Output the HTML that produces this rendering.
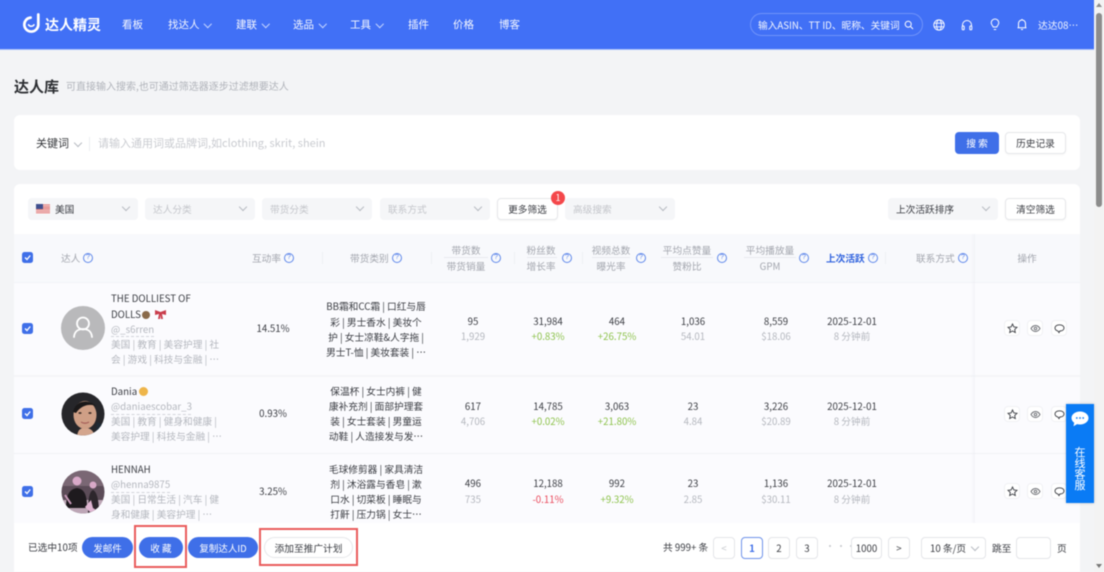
<!DOCTYPE html>
<html lang="zh"><head><meta charset="utf-8"><title>达人库</title>
<style>
html,body{margin:0;padding:0;width:1104px;height:572px;overflow:hidden;background:#f3f4f6}
#w{position:relative;width:1104px;height:572px;font-family:"Noto Sans CJK SC","Liberation Sans",sans-serif;font-size:9.7px;color:#3a3c42;filter:blur(.4px)}
.a{position:absolute}
.t{position:absolute;white-space:nowrap;line-height:16px}
.c{transform:translateX(-50%)}
.g{color:#b4b7be}
.h{color:#a3a6ae}
.n{color:#fff;font-size:10.5px;opacity:.95}
.gr{color:#8cc24a}
.r{color:#ea4a5c}
.sel{position:absolute;top:198px;height:22px;background:#f5f6f8;border-radius:4px}
.sel i,.ch{position:absolute;width:5px;height:5px;border-right:1px solid #b8bbc2;border-bottom:1px solid #b8bbc2;transform:rotate(45deg)}
.sel i{right:9px;top:6px}
.nch{position:absolute;top:21px;width:4.5px;height:4.5px;border-right:1px solid #c3d3ff;border-bottom:1px solid #c3d3ff;transform:rotate(45deg)}
.btn{position:absolute;background:#fff;border:1px solid #e6e7ea;border-radius:4px;box-sizing:border-box;text-align:center;color:#3a3c42;box-shadow:0 1px 2px rgba(0,0,0,.04)}
.q{position:absolute;box-sizing:border-box;width:10px;height:10px;border:1px solid #5f88ea;border-radius:50%;color:#5f88ea;font-size:7px;line-height:8px;text-align:center;font-family:"Liberation Sans",sans-serif;margin-left:-5px;margin-top:-5px}
.cb{position:absolute;left:22px;width:11px;height:11px;border-radius:2.5px;background:#3f6fe8}
.cb svg{position:absolute;left:0;top:0}
.ib{position:absolute;width:16px;height:16px;background:#fff;border:1px solid #f0f1f4;border-radius:4px;box-sizing:border-box}
.ib svg{position:absolute;left:1.5px;top:1.5px}
.p{position:absolute;top:537px;height:22px;box-sizing:border-box;background:#fff;border:1px solid #e4e5e9;border-radius:4px;text-align:center;line-height:21px;color:#3a3c42}
.pill{position:absolute;top:537px;height:21px;border-radius:11px;background:#3f6fe8;color:#fff;text-align:center;line-height:22px;font-size:9.5px}
.red{position:absolute;box-sizing:border-box;border:2px solid #e95c5c}
.nl{position:absolute;width:1px;background:#eef0f4}
.ul{position:absolute;height:1px;background:#e8eaef}
.dash{position:absolute;border-top:1px dashed #d2d4da;height:0}
.d{position:absolute;top:545px;width:2px;height:2px;border-radius:50%;background:#c4c6cb}
</style></head><body><div id="w">

<div class="a" style="left:-5px;top:-5px;width:1114px;height:582px;background:#f3f4f6"></div>

<!-- header -->
<div class="a" style="left:-5px;top:-5px;width:1099px;height:54px;background:#4170f6"></div>
<div class="a" style="left:-5px;top:49px;width:1099px;height:1px;background:#a9c0fb"></div>
<svg class="a" style="left:23px;top:13px" width="19" height="21" viewBox="0 0 19 21" fill="none"><path d="M15.300 1.500V11.300A7 7 0 1 1 7.600 4.600" stroke="#fff" stroke-width="2.700" stroke-linecap="round"/><path d="M5.500 11.800C6.800 13.800 9.800 13.800 11 11.800" stroke="#fff" stroke-width="1.500" stroke-linecap="round"/></svg>
<div class="t" style="left:45px;top:16px;font-size:14px;font-weight:700;color:#fff;line-height:18px">达人精灵</div>
<div class="t n" style="left:122px;top:17px">看板</div>
<div class="t n" style="left:168px;top:17px">找达人</div><div class="nch" style="left:205px"></div>
<div class="t n" style="left:236px;top:17px">建联</div><div class="nch" style="left:263px"></div>
<div class="t n" style="left:293px;top:17px">选品</div><div class="nch" style="left:320px"></div>
<div class="t n" style="left:350px;top:17px">工具</div><div class="nch" style="left:377px"></div>
<div class="t n" style="left:408px;top:17px">插件</div>
<div class="t n" style="left:453px;top:17px">价格</div>
<div class="t n" style="left:499px;top:17px">博客</div>
<div class="a" style="left:750px;top:13px;width:173px;height:23px;box-sizing:border-box;border:1px solid #6f93fa;border-radius:12px"></div>
<div class="t n" style="left:758px;top:17px;font-size:9.7px">输入ASIN、TT ID、昵称、关键词</div>
<svg class="a" style="left:904px;top:20px" width="10" height="10" viewBox="0 0 10 10" fill="none" stroke="#fff"><circle cx="4.200" cy="4.200" r="3"/><path d="M6.500 6.500L9 9"/></svg>
<svg class="a" style="left:933px;top:19px" width="12" height="12" viewBox="0 0 12 12" fill="none" stroke="#fff" stroke-width=".9"><circle cx="6" cy="6" r="5.200"/><ellipse cx="6" cy="6" rx="2.400" ry="5.200"/><path d="M1 4.200H11M1 7.800H11"/></svg>
<svg class="a" style="left:961px;top:19px" width="12" height="12" viewBox="0 0 12 12" fill="none" stroke="#fff" stroke-width="1"><path d="M1.500 7.500V6a4.500 4.500 0 0 1 9 0v1.500"/><rect x="1.200" y="7" width="2" height="3.800" rx=".8"/><rect x="8.800" y="7" width="2" height="3.800" rx=".8"/></svg>
<svg class="a" style="left:989px;top:18px" width="12" height="13" viewBox="0 0 12 13" fill="none" stroke="#fff" stroke-width="1"><path d="M4.200 9C3.800 7.600 2.200 6.800 2.200 4.800a3.800 3.800 0 0 1 7.600 0C9.800 6.800 8.200 7.600 7.800 9Z"/><path d="M4.800 11.500H7.200"/></svg>
<svg class="a" style="left:1016px;top:18px" width="12" height="13" viewBox="0 0 12 13" fill="none" stroke="#fff" stroke-width="1"><path d="M2.500 9.800V5.500a3.500 3.500 0 0 1 7 0v4.300ZM1.500 9.800H10.500M5 11.500H7M6 1V2"/></svg>
<div class="t n" style="left:1038px;top:17px;font-size:9.800px">达达08…</div>

<!-- scrollbar -->
<div class="a" style="left:1094px;top:-5px;width:15px;height:582px;background:#f3f3f3"></div>
<div class="a" style="left:1096px;top:13px;width:6px;height:194px;background:#8c8c8c;border-radius:3px"></div>
<div class="a" style="left:1096px;top:3px;width:0;height:0;border:3px solid transparent;border-bottom:4px solid #8c8c8c;border-top:0"></div>
<div class="a" style="left:1096px;top:564px;width:0;height:0;border:3px solid transparent;border-top:4px solid #777;border-bottom:0"></div>

<!-- title -->
<div class="t" style="left:14px;top:77px;font-size:15px;font-weight:700;color:#2d2f33;line-height:20px">达人库</div>
<div class="t" style="left:66px;top:78px;font-size:10px;color:#b0b3ba">可直接输入搜索,也可通过筛选器逐步过滤想要达人</div>

<!-- search card -->
<div class="a" style="left:14px;top:115px;width:1066px;height:55px;background:#fff;border-radius:6px"></div>
<div class="t" style="left:36px;top:135px;font-size:11px;color:#35373b">关键词</div>
<div class="ch" style="left:75px;top:140px"></div>
<div class="a" style="left:89px;top:137px;width:1px;height:14px;background:#eceef1"></div>
<div class="t" style="left:98px;top:135px;font-size:11px;color:#c9cbd0">请输入通用词或品牌词,如clothing, skrit, shein</div>
<div class="a" style="left:955px;top:132px;width:44px;height:22px;background:#3f6fe8;border-radius:4px;color:#fff;text-align:center;line-height:23px">搜 索</div>
<div class="btn" style="left:1005px;top:132px;width:61px;height:22px;line-height:21px">历史记录</div>

<!-- table card -->
<div class="a" style="left:14px;top:184px;width:1066px;height:388px;background:#fff;border-radius:6px 6px 0 0"></div>
<div class="sel" style="left:28px;width:110px"><i></i></div>
<svg class="a" style="left:36px;top:204px" width="14" height="10" viewBox="0 0 14 10"><rect width="14" height="10" fill="#fff"/><path d="M0 .8H14M0 2.400H14M0 4H14M0 5.600H14M0 7.200H14M0 8.800H14" stroke="#d9605f" stroke-width=".9"/><rect width="7" height="5" fill="#3f4f8e"/></svg>
<div class="t" style="left:55px;top:201px;color:#3a3c42">美国</div>
<div class="sel" style="left:145px;width:110px"><i></i></div><div class="t" style="left:153px;top:201px;color:#c4c6cb">达人分类</div>
<div class="sel" style="left:262px;width:110px"><i></i></div><div class="t" style="left:270px;top:201px;color:#c4c6cb">带货分类</div>
<div class="sel" style="left:380px;width:110px"><i></i></div><div class="t" style="left:388px;top:201px;color:#c4c6cb">联系方式</div>
<div class="btn" style="left:497px;top:198px;width:61px;height:22px;line-height:21px">更多筛选</div>
<div class="a" style="left:551px;top:191px;width:14px;height:14px;border-radius:50%;background:#f4474a;color:#fff;text-align:center;font-size:9px;line-height:14px">1</div>
<div class="sel" style="left:565px;width:110px"><i></i></div><div class="t" style="left:573px;top:201px;color:#c4c6cb">高级搜索</div>
<div class="sel" style="left:888px;width:110px"><i></i></div><div class="t" style="left:896px;top:201px;color:#3a3c42">上次活跃排序</div>
<div class="btn" style="left:1005px;top:198px;width:61px;height:22px;line-height:21px">清空筛选</div>

<!-- table head/body -->
<div class="a" style="left:14px;top:234px;width:1066px;height:48px;background:#f8f9fc"></div>
<div class="a" style="left:14px;top:282px;width:1066px;height:241px;background:#fbfbfe"></div>
<div class="a" style="left:14px;top:282px;width:1066px;height:1px;background:#f2f3f7"></div>
<div class="a" style="left:14px;top:375px;width:1066px;height:2px;background:#f4f5f8"></div>
<div class="a" style="left:14px;top:453px;width:1066px;height:1px;background:#f1f2f6"></div>
<div class="a" style="left:971px;top:234px;width:4px;height:289px;background:linear-gradient(90deg,rgba(230,232,238,0),rgba(230,232,238,.35))"></div>
<div class="nl" style="left:322px;top:252px;height:12px"></div>
<div class="nl" style="left:431px;top:252px;height:12px"></div>
<div class="nl" style="left:514px;top:252px;height:12px"></div>
<div class="nl" style="left:582px;top:252px;height:12px"></div>
<div class="nl" style="left:885px;top:252px;height:12px"></div>

<div class="cb" style="top:252px"><svg width="11" height="11" viewBox="0 0 11 11" fill="none"><path d="M3 5.500L5 7.500L8.200 3.500" stroke="#fff" stroke-width="1.300"/></svg></div>
<div class="t h" style="left:61px;top:250px">达人</div><div class="q" style="left:88px;top:258px">?</div>
<div class="t h" style="left:252px;top:250px">互动率</div><div class="q" style="left:289px;top:258px">?</div>
<div class="t h" style="left:350px;top:250px">带货类别</div><div class="q" style="left:397px;top:258px">?</div>
<div class="t h c" style="left:466px;top:242px">带货数</div><div class="ul" style="left:444px;top:257px;width:44px"></div><div class="t h c" style="left:466px;top:258px">带货销量</div><div class="q" style="left:496px;top:258px">?</div>
<div class="t h c" style="left:541px;top:242px">粉丝数</div><div class="ul" style="left:527px;top:257px;width:30px"></div><div class="t h c" style="left:541px;top:258px">增长率</div><div class="q" style="left:567px;top:258px">?</div>
<div class="t h c" style="left:611px;top:242px">视频总数</div><div class="ul" style="left:592px;top:257px;width:38px"></div><div class="t h c" style="left:611px;top:258px">曝光率</div><div class="q" style="left:641px;top:258px">?</div>
<div class="t h c" style="left:687px;top:242px">平均点赞量</div><div class="ul" style="left:661px;top:257px;width:52px"></div><div class="t h c" style="left:687px;top:258px">赞粉比</div><div class="q" style="left:722px;top:258px">?</div>
<div class="t h c" style="left:770px;top:242px">平均播放量</div><div class="ul" style="left:744px;top:257px;width:52px"></div><div class="t h c" style="left:770px;top:258px">GPM</div><div class="q" style="left:804px;top:258px">?</div>
<div class="t" style="left:826px;top:250px;color:#2f62de;font-weight:700">上次活跃</div><div class="q" style="left:873px;top:258px">?</div>
<div class="t h" style="left:916px;top:250px">联系方式</div><div class="q" style="left:963px;top:258px">?</div>
<div class="t h c" style="left:1027px;top:250px">操作</div>

<!-- row 1 -->
<div class="cb" style="top:323px"><svg width="11" height="11" viewBox="0 0 11 11" fill="none"><path d="M3 5.500L5 7.500L8.200 3.500" stroke="#fff" stroke-width="1.300"/></svg></div>
<svg class="a" style="left:61px;top:306px" width="44" height="44" viewBox="0 0 44 44"><circle cx="22" cy="22" r="22" fill="#b9b9bb"/><circle cx="22" cy="17.500" r="6" fill="none" stroke="#fff" stroke-width="1.800"/><path d="M13 31c.5-5.500 4-8 9-8s8.500 2.500 9 8" fill="none" stroke="#fff" stroke-width="1.800" stroke-linecap="round"/></svg>
<div class="t" style="left:111px;top:290px">THE DOLLIEST OF</div>
<div class="t" style="left:111px;top:306px">DOLLS</div>
<div class="a" style="left:142px;top:311px;width:8px;height:8px;border-radius:50%;background:#8a6a4a"></div>
<svg class="a" style="left:155px;top:310px" width="11" height="9" viewBox="0 0 11 9"><path d="M0 0L5.500 2L11 0V5L7 4L8 9H6L5.500 5L5 9H3L4 4L0 5Z" fill="#c93d4c"/></svg>
<div class="t g" style="left:111px;top:321px">@_s6rren</div><div class="dash" style="left:111px;top:336px;width:43px"></div>
<div class="t g" style="left:111px;top:336px">美国 | 教育 | 美容护理 | 社</div>
<div class="t g" style="left:111px;top:351px">会 | 游戏 | 科技与金融 | …</div>
<div class="t c" style="left:273px;top:320px">14.51%</div>
<div class="t c" style="left:376px;top:298px">BB霜和CC霜 | 口红与唇</div>
<div class="t c" style="left:376px;top:314px">彩 | 男士香水 | 美妆个</div>
<div class="t c" style="left:376px;top:329px">护 | 女士凉鞋&amp;人字拖 |</div>
<div class="t c" style="left:376px;top:344px">男士T-恤 | 美妆套装 | …</div>
<div class="t c" style="left:473px;top:313px">95</div><div class="t c g" style="left:473px;top:328px">1,929</div>
<div class="t c" style="left:548px;top:313px">31,984</div><div class="t c gr" style="left:548px;top:328px">+0.83%</div>
<div class="t c" style="left:617px;top:313px">464</div><div class="t c gr" style="left:617px;top:328px">+26.75%</div>
<div class="t c" style="left:693px;top:313px">1,036</div><div class="t c g" style="left:693px;top:328px">54.01</div>
<div class="t c" style="left:776px;top:313px">8,559</div><div class="t c g" style="left:776px;top:328px">$18.06</div>
<div class="t c" style="left:852px;top:313px">2025-12-01</div><div class="t c g" style="left:852px;top:328px">8 分钟前</div>

<!-- row 2 -->
<div class="cb" style="top:408px"><svg width="11" height="11" viewBox="0 0 11 11" fill="none"><path d="M3 5.500L5 7.500L8.200 3.500" stroke="#fff" stroke-width="1.300"/></svg></div>
<svg class="a" style="left:61px;top:392px" width="44" height="44" viewBox="0 0 44 44"><defs><clipPath id="c1"><circle cx="22" cy="22" r="21.500"/></clipPath></defs><g clip-path="url(#c1)"><rect width="44" height="44" fill="#26262a"/><path d="M0 28L9 44H0Z" fill="#3f6a86"/><path d="M36 30L44 34V44H34Z" fill="#1f2a34"/><path d="M16 44C17 38 19 36 24 36s8 2 10 8Z" fill="#d4a68e"/><ellipse cx="24" cy="23" rx="11.500" ry="14" fill="#cf9f86"/><path d="M12 20C14 10 26 5 36 15C32 12 22 11 15 21Z" fill="#1a1819"/><ellipse cx="19" cy="21" rx="1.600" ry=".9" fill="#3a2a24"/><ellipse cx="29" cy="21" rx="1.600" ry=".9" fill="#3a2a24"/><path d="M20 30c2.500 1.500 5.500 1.500 8 0" stroke="#a8625c" stroke-width="1.300" fill="none"/></g></svg>
<div class="t" style="left:111px;top:383px">Dania</div>
<div class="a" style="left:139px;top:387px;width:9px;height:9px;border-radius:50%;background:#eeb54a"></div>
<div class="t g" style="left:111px;top:398px">@daniaescobar_3</div><div class="dash" style="left:111px;top:414px;width:80px"></div>
<div class="t g" style="left:111px;top:413px">美国 | 教育 | 健身和健康 |</div>
<div class="t g" style="left:111px;top:428px">美容护理 | 科技与金融 | …</div>
<div class="t c" style="left:273px;top:405px">0.93%</div>
<div class="t c" style="left:376px;top:383px">保温杯 | 女士内裤 | 健</div>
<div class="t c" style="left:376px;top:398px">康补充剂 | 面部护理套</div>
<div class="t c" style="left:376px;top:413px">装 | 女士套装 | 男童运</div>
<div class="t c" style="left:376px;top:428px">动鞋 | 人造接发与发…</div>
<div class="t c" style="left:473px;top:398px">617</div><div class="t c g" style="left:473px;top:413px">4,706</div>
<div class="t c" style="left:548px;top:398px">14,785</div><div class="t c gr" style="left:548px;top:413px">+0.02%</div>
<div class="t c" style="left:617px;top:398px">3,063</div><div class="t c gr" style="left:617px;top:413px">+21.80%</div>
<div class="t c" style="left:693px;top:398px">23</div><div class="t c g" style="left:693px;top:413px">4.84</div>
<div class="t c" style="left:776px;top:398px">3,226</div><div class="t c g" style="left:776px;top:413px">$20.89</div>
<div class="t c" style="left:852px;top:398px">2025-12-01</div><div class="t c g" style="left:852px;top:413px">8 分钟前</div>

<!-- row 3 -->
<div class="cb" style="top:486px"><svg width="11" height="11" viewBox="0 0 11 11" fill="none"><path d="M3 5.500L5 7.500L8.200 3.500" stroke="#fff" stroke-width="1.300"/></svg></div>
<svg class="a" style="left:61px;top:470px" width="44" height="44" viewBox="0 0 44 44"><defs><clipPath id="c2"><circle cx="22" cy="22" r="21.500"/></clipPath></defs><g clip-path="url(#c2)"><rect width="44" height="44" fill="#5c4c58"/><path d="M0 0H44V16H0Z" fill="#7a6774"/><path d="M0 30H44V44H0Z" fill="#bda6b6"/><circle cx="16" cy="11" r="4.500" fill="#d9a9c8"/><circle cx="32" cy="15" r="3.500" fill="#d9a9c8"/><path d="M5 38C5 24 9 19 16 18C23 19 26 24 26 38Z" fill="#1e1a1e"/><path d="M27 44C27 30 28 22 32 20C36 22 38 30 38 44Z" fill="#2d262c"/><path d="M24 37L30 30L32 38L37 41L29 42Z" fill="#e0b6d2"/><path d="M4 25L10 34" stroke="#c99ab9" stroke-width="2"/></g></svg>
<div class="t" style="left:111px;top:461px">HENNAH</div>
<div class="t g" style="left:111px;top:476px">@henna9875</div><div class="dash" style="left:111px;top:492px;width:59px"></div>
<div class="t g" style="left:111px;top:491px">美国 | 日常生活 | 汽车 | 健</div>
<div class="t g" style="left:111px;top:506px">身和健康 | 美容护理 | …</div>
<div class="t c" style="left:273px;top:483px">3.25%</div>
<div class="t c" style="left:376px;top:461px">毛球修剪器 | 家具清洁</div>
<div class="t c" style="left:376px;top:476px">剂 | 沐浴露与香皂 | 漱</div>
<div class="t c" style="left:376px;top:491px">口水 | 切菜板 | 睡眠与</div>
<div class="t c" style="left:376px;top:506px">打鼾 | 压力锅 | 女士…</div>
<div class="t c" style="left:473px;top:475px">496</div><div class="t c g" style="left:473px;top:491px">735</div>
<div class="t c" style="left:548px;top:475px">12,188</div><div class="t c r" style="left:548px;top:491px">-0.11%</div>
<div class="t c" style="left:617px;top:475px">992</div><div class="t c gr" style="left:617px;top:491px">+9.32%</div>
<div class="t c" style="left:693px;top:475px">23</div><div class="t c g" style="left:693px;top:491px">2.85</div>
<div class="t c" style="left:776px;top:475px">1,136</div><div class="t c g" style="left:776px;top:491px">$30.11</div>
<div class="t c" style="left:852px;top:475px">2025-12-01</div><div class="t c g" style="left:852px;top:491px">8 分钟前</div>

<!-- action icons -->
<div class="ib" style="left:1004px;top:320px"><svg width="11" height="11" viewBox="0 0 11 11" fill="none" stroke="#3a3c42" stroke-width=".9"><path d="M5.500 1L6.900 3.900L10 4.300L7.700 6.400L8.300 9.500L5.500 8L2.700 9.500L3.300 6.400L1 4.300L4.100 3.900Z"/></svg></div>
<div class="ib" style="left:1027px;top:320px"><svg width="11" height="11" viewBox="0 0 11 11" fill="none" stroke="#6a6c72" stroke-width=".9"><path d="M1 5.500C2.500 3 4 2.500 5.500 2.500S8.500 3 10 5.500C8.500 8 7 8.500 5.500 8.500S2.500 8 1 5.500Z"/><circle cx="5.500" cy="5.500" r="1.300"/></svg></div>
<div class="ib" style="left:1051px;top:320px"><svg width="11" height="11" viewBox="0 0 11 11" fill="none" stroke="#3a3c42" stroke-width=".9"><path d="M5.500 1.800C8 1.800 10 3 10 5S8 8 5.800 8L5 9.600L3.800 7.900C2.200 7.500 1 6.500 1 5C1 3 3 1.800 5.500 1.800Z"/></svg></div>
<div class="ib" style="left:1004px;top:406px"><svg width="11" height="11" viewBox="0 0 11 11" fill="none" stroke="#3a3c42" stroke-width=".9"><path d="M5.500 1L6.900 3.900L10 4.300L7.700 6.400L8.300 9.500L5.500 8L2.700 9.500L3.300 6.400L1 4.300L4.100 3.900Z"/></svg></div>
<div class="ib" style="left:1027px;top:406px"><svg width="11" height="11" viewBox="0 0 11 11" fill="none" stroke="#6a6c72" stroke-width=".9"><path d="M1 5.500C2.500 3 4 2.500 5.500 2.500S8.500 3 10 5.500C8.500 8 7 8.500 5.500 8.500S2.500 8 1 5.500Z"/><circle cx="5.500" cy="5.500" r="1.300"/></svg></div>
<div class="ib" style="left:1051px;top:406px"><svg width="11" height="11" viewBox="0 0 11 11" fill="none" stroke="#3a3c42" stroke-width=".9"><path d="M5.500 1.800C8 1.800 10 3 10 5S8 8 5.800 8L5 9.600L3.800 7.900C2.200 7.500 1 6.500 1 5C1 3 3 1.800 5.500 1.800Z"/></svg></div>
<div class="ib" style="left:1004px;top:483px"><svg width="11" height="11" viewBox="0 0 11 11" fill="none" stroke="#3a3c42" stroke-width=".9"><path d="M5.500 1L6.900 3.900L10 4.300L7.700 6.400L8.300 9.500L5.500 8L2.700 9.500L3.300 6.400L1 4.300L4.100 3.900Z"/></svg></div>
<div class="ib" style="left:1027px;top:483px"><svg width="11" height="11" viewBox="0 0 11 11" fill="none" stroke="#6a6c72" stroke-width=".9"><path d="M1 5.500C2.500 3 4 2.500 5.500 2.500S8.500 3 10 5.500C8.500 8 7 8.500 5.500 8.500S2.500 8 1 5.500Z"/><circle cx="5.500" cy="5.500" r="1.300"/></svg></div>
<div class="ib" style="left:1051px;top:483px"><svg width="11" height="11" viewBox="0 0 11 11" fill="none" stroke="#3a3c42" stroke-width=".9"><path d="M5.500 1.800C8 1.800 10 3 10 5S8 8 5.800 8L5 9.600L3.800 7.900C2.200 7.500 1 6.500 1 5C1 3 3 1.800 5.500 1.800Z"/></svg></div>

<!-- bottom bar -->
<div class="a" style="left:14px;top:523px;width:1066px;height:49px;background:#fff;border-radius:0 0 8px 8px"></div>
<div class="t" style="left:28px;top:539px">已选中10项</div>
<div class="pill" style="left:82px;width:51px">发邮件</div>
<div class="pill" style="left:139px;width:44px">收 藏</div>
<div class="pill" style="left:188px;width:70px">复制达人ID</div>
<div class="a" style="left:264px;top:537px;width:89px;height:21px;box-sizing:border-box;border:1px solid #e6e7ea;border-radius:11px;background:#fff;text-align:center;line-height:20px">添加至推广计划</div>
<div class="red" style="left:134px;top:525px;width:53px;height:43px"></div>
<div class="red" style="left:259px;top:528px;width:99px;height:38px"></div>

<div class="t" style="left:663px;top:539px">共 999+ 条</div>
<div class="p" style="left:713px;width:22px;color:#c4c6cb">&lt;</div>
<div class="p" style="left:741px;width:22px;border-color:#6f93ea;color:#3f6fe8;font-weight:700">1</div>
<div class="p" style="left:768px;width:22px">2</div>
<div class="p" style="left:796px;width:22px">3</div>
<div class="d" style="left:829px"></div><div class="d" style="left:840px"></div><div class="d" style="left:850px"></div>
<div class="p" style="left:851px;width:31px;background:#fff">1000</div>
<div class="p" style="left:888px;width:22px">&gt;</div>
<div class="p" style="left:921px;width:65px;text-align:left;padding-left:8px">10 条/页</div>
<div class="ch" style="left:972px;top:544px"></div>
<div class="t" style="left:992px;top:540px">跳至</div>
<div class="p" style="left:1016px;width:35px"></div>
<div class="t" style="left:1057px;top:540px">页</div>

<!-- online service -->
<div class="a" style="left:1066px;top:404px;width:28px;height:99px;background:#0a7bf5;box-shadow:0 0 3px rgba(0,0,0,.2)"></div>
<svg class="a" style="left:1071px;top:411px" width="18" height="16" viewBox="0 0 18 16"><path d="M9 .5C13.700 .5 17.500 3.300 17.500 7S13.700 13.500 9 13.500C8 13.500 7 13.400 6.100 13.100L2.500 15.300L3.200 11.700C1.500 10.500 .5 8.900 .5 7C.5 3.300 4.300 .5 9 .5Z" fill="#fff"/><circle cx="5.800" cy="7" r=".9" fill="#0a7bf5"/><circle cx="9" cy="7" r=".9" fill="#0a7bf5"/><circle cx="12.200" cy="7" r=".9" fill="#0a7bf5"/></svg>
<div class="a" style="left:1066px;top:447px;width:28px;text-align:center;color:#fff;font-size:11px;line-height:11px">在<br>线<br>客<br>服</div>

</div></body></html>
